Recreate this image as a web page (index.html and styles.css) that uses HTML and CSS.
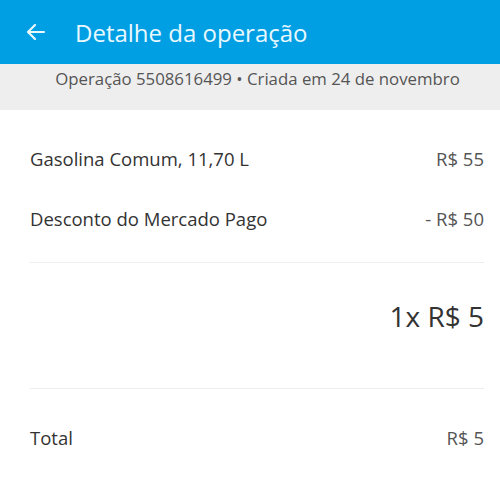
FILE: index.html
```html
<!DOCTYPE html>
<html lang="pt-BR">
<head>
    <meta charset="UTF-8">
    <meta name="viewport" content="width=device-width, initial-scale=1.0">
    <title>Detalhe da operação</title>
    <link rel="stylesheet" href="styles.css">
</head>
<body>
    <header class="app-bar">
        <svg class="back-icon" width="24" height="24" viewBox="0 0 24 24">
            <path d="M20 12H5M11 5l-7 7 7 7" fill="none" stroke="#e8f8ff" stroke-width="2.2" stroke-linecap="round" stroke-linejoin="round"/>
        </svg>
        <h1 class="app-title">Detalhe da operação</h1>
    </header>

    <div class="op-info">Operação 5508616499 • Criada em 24 de novembro</div>

    <section class="detail">
        <div class="row">
            <span>Gasolina Comum, 11,70 L</span>
            <span class="amount">R$ 55</span>
        </div>
        <div class="row">
            <span>Desconto do Mercado Pago</span>
            <span class="amount">- R$ 50</span>
        </div>

        <div class="installments">1x R$ 5</div>

        <div class="row total">
            <span>Total</span>
            <span class="amount">R$ 5</span>
        </div>
    </section>
</body>
</html>
```

FILE: styles.css
```css
body {
    margin: 0;
    font-family: "Open Sans", Lato, sans-serif;
    color: #333;
    background-color: #fff;
}
.app-bar {
    display: flex;
    align-items: center;
    height: 64px;
    padding: 0 24px;
    background-color: #009ee3;
}
.back-icon {
    flex: none;
    margin-right: 27px;
}
.app-title {
    margin: 0;
    font-size: 24px;
    font-weight: normal;
    color: #e8f8ff;
}
.op-info {
    height: 46px;
    padding: 3px 0 0 15px;
    box-sizing: border-box;
    text-align: center;
    font-size: 16.8px;
    color: #555;
    background-color: #eee;
}
.detail {
    padding: 0 16px 0 30px;
}
.row {
    display: flex;
    justify-content: space-between;
    align-items: center;
    height: 60px;
    font-size: 18.5px;
}
.row:first-child {
    margin-top: 18px;
}
.amount {
    color: #555;
}
.installments {
    border-top: 1px solid #eee;
    border-bottom: 1px solid #eee;
    margin-top: 14px;
    padding: 34px 0 53px;
    text-align: right;
    font-size: 28px;
    color: #333;
}
.total {
    margin-top: 18px;
}
```
